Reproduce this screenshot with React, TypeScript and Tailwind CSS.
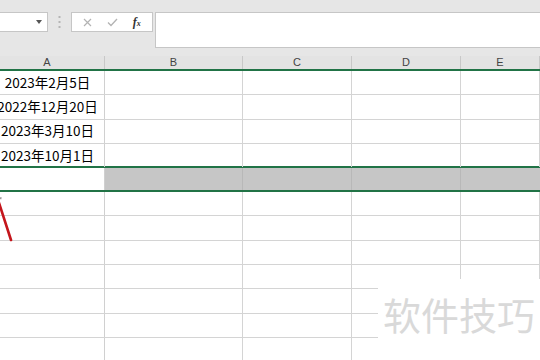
import React from "react"

const dates = ["2023年2月5日", "2022年12月20日", "2023年3月10日", "2023年10月1日"]
const cols = ["A", "B", "C", "D", "E"]
const grid = "grid grid-cols-[105px_138px_109px_109px_1fr]"

function Row({ text }: { text?: string }) {
  return (
    <div className={`${grid} h-[24.3px] border-b border-[#d4d4d4]`}>
      <div className="flex items-center justify-center border-r border-[#d0d0d0] text-[13.5px] leading-none text-black">
        <span className="-ml-[9px] whitespace-nowrap">{text}</span>
      </div>
      {cols.slice(1).map((c) => (
        <div key={c} className="border-r border-[#d4d4d4]" />
      ))}
    </div>
  )
}

export default function App() {
  return (
    <div
      className="relative w-[540px] h-[360px] overflow-hidden bg-white"
      style={{ fontFamily: '"Noto Sans CJK SC", "Noto Sans", sans-serif' }}
    >
      {/* formula bar strip */}
      <div className="flex items-start h-[56px] bg-[#e6e6e6] pt-[12px]">
        <div className="relative w-[48px] h-[20px] bg-white border border-l-0 border-[#c6c6c6]">
          <svg className="absolute right-[5px] top-[7px]" width="6" height="4" viewBox="0 0 6 4">
            <path d="M0 0h6L3 4z" fill="#555" />
          </svg>
        </div>
        <div className="w-[23px] h-[20px] flex items-center justify-center">
          <svg width="3" height="14" viewBox="0 0 3 14">
            <rect x="0.5" y="1" width="2" height="2" fill="#b5b5b5" />
            <rect x="0.5" y="6" width="2" height="2" fill="#b5b5b5" />
            <rect x="0.5" y="11" width="2" height="2" fill="#b5b5b5" />
          </svg>
        </div>
        <div className="w-[82px] h-[20px] bg-white border border-[#c6c6c6] flex items-center justify-around px-[4px]">
          <svg width="9" height="9" viewBox="0 0 9 9">
            <path d="M1 1l7 7M8 1L1 8" stroke="#b3b3b3" strokeWidth="1.2" />
          </svg>
          <svg width="11" height="9" viewBox="0 0 11 9">
            <path d="M1 4.5l3 3L10 1" stroke="#b3b3b3" strokeWidth="1.3" fill="none" />
          </svg>
          <span
            className="italic font-bold text-[12px] leading-none text-[#333]"
            style={{ fontFamily: '"Liberation Serif", serif' }}
          >
            f<span className="text-[8px]">x</span>
          </span>
        </div>
        <div className="ml-[2px] flex-1 h-[36px] bg-white border border-r-0 border-[#c6c6c6]" />
      </div>

      {/* column headers */}
      <div className={`${grid} h-[15px] bg-[#e3e3e3] border-b-2 border-[#217346]`}>
        {cols.map((c) => (
          <div
            key={c}
            className={`flex items-center justify-center border-r border-[#c8c8c8] text-[11px] leading-none text-[#444] ${c === "A" ? "pr-[10px]" : ""}`}
            style={{ fontFamily: '"Liberation Sans", sans-serif' }}
          >
            {c}
          </div>
        ))}
      </div>

      {dates.map((d, i) => (
        <Row key={i} text={d} />
      ))}

      {/* selected row */}
      <div className="border-y-2 border-[#217346] -mt-[2px]">
        <div className={`${grid} h-[22px]`}>
          <div className="bg-white border-r border-[#d0d0d0]" />
          <div className="bg-[#c6c6c6] border-r border-[#b8b8b8]" />
          <div className="bg-[#c6c6c6] border-r border-[#b8b8b8]" />
          <div className="bg-[#c6c6c6] border-r border-[#b8b8b8]" />
          <div className="bg-[#c6c6c6]" />
        </div>
      </div>

      {Array.from({ length: 7 }).map((_, i) => (
        <Row key={`e${i}`} />
      ))}

      {/* red pointer */}
      <svg className="absolute left-0 top-[195px]" width="16" height="50" viewBox="0 0 16 50">
        <path d="M0 3l1.5 0.5" stroke="#9a9a9a" strokeWidth="2" />
        <path d="M-1 8L11 45" stroke="#c4161c" strokeWidth="2.6" strokeLinecap="round" />
      </svg>

      {/* watermark */}
      <div className="absolute left-[378px] top-[279px] right-0 bottom-0 bg-white flex items-start pt-[12px] pl-[5px]">
        <span className="text-[38px] leading-[46px] text-[#d9d9d9]">软件技巧</span>
      </div>
    </div>
  )
}
